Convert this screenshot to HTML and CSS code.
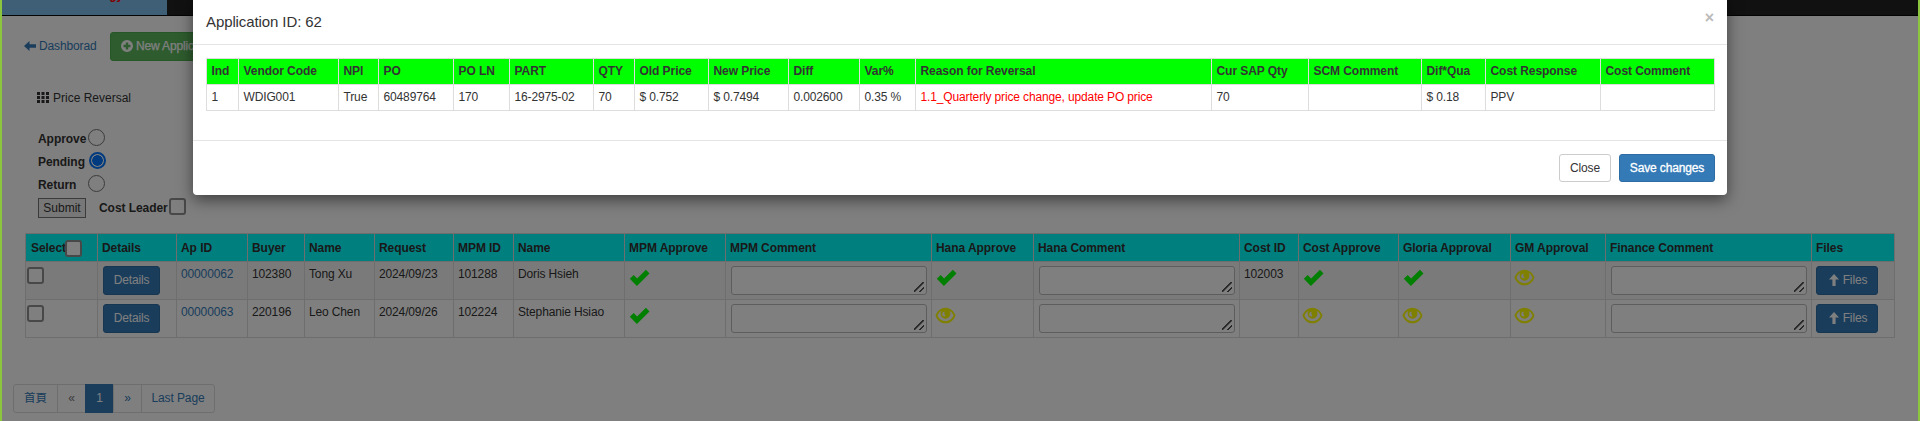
FILE: index.html
```
<!DOCTYPE html>
<html lang="en">
<head>
<meta charset="utf-8">
<title>Price Reversal</title>
<link rel="stylesheet" href="styles.css">
</head>
<body>
<svg class="defs" aria-hidden="true">
  <symbol id="check" viewBox="0 0 20 17"><path d="M.3 9.700 4.200 6l3.400 3.400L16.400.8l3.600 3.600L7.400 17z"/></symbol>
  <symbol id="eye" viewBox="0 0 22 17"><path fill-rule="evenodd" d="M11 .3C5.700.3 2 4.300.5 8.500 2 12.700 5.700 16.700 11 16.700s9-4 10.500-8.200C20 4.300 16.300.3 11 .3zM7.200 3.300C5.900 4.500 5.900 5.500 5.900 6.800a5.100 5.100 0 0 0 10.200 0c0-1.300 0-2.300-1.300-3.500 2.200 1.100 3.700 3.100 4.600 5.200-1.700 3.700-4.700 6-8.400 6s-6.700-2.300-8.400-6c.9-2.100 2.400-4.100 4.600-5.200zM8.500 4.800c-1.300 1.300-1.200 4 .5 4.600 1.300.4 2.300-.5 1.600-1.500C9.600 7 9.500 5.500 10.300 4.600z"/></symbol>
  <symbol id="left" viewBox="0 0 12 10"><path d="M0 5 5.500 0v3.300H12v3.400H5.500V10z"/></symbol>
  <symbol id="up" viewBox="0 0 10 12"><path d="M5 0l5 5.600H6.600V12H3.400V5.600H0z"/></symbol>
  <symbol id="plus" viewBox="0 0 12 12"><path fill-rule="evenodd" d="M6 0a6 6 0 1 0 0 12A6 6 0 0 0 6 0zM4.800 2.500h2.400v2.300h2.300v2.400H7.200v2.300H4.800V7.200H2.500V4.800h2.300z"/></symbol>
  <symbol id="grid" viewBox="0 0 12 11"><path d="M0 0h3v3H0zM4.500 0h3v3h-3zM9 0h3v3H9zM0 4h3v3H0zM4.500 4h3v3h-3zM9 4h3v3H9zM0 8h3v3H0zM4.500 8h3v3h-3zM9 8h3v3H9z"/></symbol>
</svg>

<div class="page">
  <header class="navbar"><div class="brand">Technology</div></header>
  <nav class="toolbar">
    <a class="dash"><svg class="i12"><use href="#left"/></svg>Dashborad</a>
    <a class="btn success"><svg class="i12 round"><use href="#plus"/></svg>New Application</a>
  </nav>
  <div class="heading"><svg class="i12"><use href="#grid"/></svg>Price Reversal</div>
  <form class="filters">
    <label class="opt"><b>Approve</b><input class="box" type="radio" name="st"></label>
    <label class="opt mid"><b>Pending</b><input class="box" type="radio" name="st" checked></label>
    <label class="opt"><b>Return</b><input class="box" type="radio" name="st"></label>
    <div class="submit-row"><button class="submit" type="button">Submit</button><b>Cost Leader</b><input class="box" type="checkbox"></div>
  </form>

  <table class="grid main">
    <colgroup><col class="m1"><col class="m2"><col class="m3"><col class="m4"><col class="m5"><col class="m6"><col class="m7"><col class="m8"><col class="m9"><col class="m10"><col class="m11"><col class="m12"><col class="m13"><col class="m14"><col class="m15"><col class="m16"><col class="m17"><col class="m18"></colgroup>
    <thead><tr><th class="selhead"><span class="sel">Select<input class="box" type="checkbox"></span></th><th>Details</th><th>Ap ID</th><th>Buyer</th><th>Name</th><th>Request</th><th>MPM ID</th><th>Name</th><th>MPM Approve</th><th>MPM Comment</th><th>Hana Approve</th><th>Hana Comment</th><th>Cost ID</th><th>Cost Approve</th><th>Gloria Approval</th><th>GM Approval</th><th>Finance Comment</th><th>Files</th></tr></thead>
    <tbody>
      <tr class="odd"><td class="pick"><input class="box" type="checkbox"></td><td><a class="btn primary">Details</a></td><td><a>00000062</a></td><td>102380</td><td>Tong Xu</td><td>2024/09/23</td><td>101288</td><td>Doris Hsieh</td><td><svg class="check"><use href="#check"/></svg></td><td><textarea></textarea></td><td><svg class="check"><use href="#check"/></svg></td><td><textarea></textarea></td><td>102003</td><td><svg class="check"><use href="#check"/></svg></td><td><svg class="check"><use href="#check"/></svg></td><td><svg class="eye"><use href="#eye"/></svg></td><td><textarea></textarea></td><td><a class="btn primary"><svg class="up"><use href="#up"/></svg>Files</a></td></tr>
      <tr><td class="pick"><input class="box" type="checkbox"></td><td><a class="btn primary">Details</a></td><td><a>00000063</a></td><td>220196</td><td>Leo Chen</td><td>2024/09/26</td><td>102224</td><td>Stephanie Hsiao</td><td><svg class="check"><use href="#check"/></svg></td><td><textarea></textarea></td><td><svg class="eye"><use href="#eye"/></svg></td><td><textarea></textarea></td><td></td><td><svg class="eye"><use href="#eye"/></svg></td><td><svg class="eye"><use href="#eye"/></svg></td><td><svg class="eye"><use href="#eye"/></svg></td><td><textarea></textarea></td><td><a class="btn primary"><svg class="up"><use href="#up"/></svg>Files</a></td></tr>
    </tbody>
  </table>

  <div class="pager"><a class="p1">首頁</a><a class="p2 muted">«</a><a class="p2 current">1</a><a class="p2">»</a><a class="p3">Last Page</a></div>
</div>

<div class="backdrop">
  <section class="modal">
    <div class="modal-head"><span>Application ID: 62</span><span class="x">×</span></div>
    <div class="modal-body">
      <table class="grid detail">
        <colgroup><col class="d1"><col class="d2"><col class="d3"><col class="d4"><col class="d5"><col class="d6"><col class="d7"><col class="d8"><col class="d9"><col class="d10"><col class="d11"><col class="d12"><col class="d13"><col class="d14"><col class="d15"><col class="d16"><col class="d17"></colgroup>
        <thead><tr><th>Ind</th><th>Vendor Code</th><th>NPI</th><th>PO</th><th>PO LN</th><th>PART</th><th>QTY</th><th>Old Price</th><th>New Price</th><th>Diff</th><th>Var%</th><th>Reason for Reversal</th><th>Cur SAP Qty</th><th>SCM Comment</th><th>Dif*Qua</th><th>Cost Response</th><th>Cost Comment</th></tr></thead>
        <tbody><tr><td>1</td><td>WDIG001</td><td>True</td><td>60489764</td><td>170</td><td>16-2975-02</td><td>70</td><td>$ 0.752</td><td>$ 0.7494</td><td>0.002600</td><td>0.35 %</td><td class="reason">1.1_Quarterly price change, update PO price</td><td>70</td><td></td><td>$ 0.18</td><td>PPV</td><td></td></tr></tbody>
      </table>
    </div>
    <div class="modal-foot"><button class="btn plain">Close</button><button class="btn primary save">Save changes</button></div>
  </section>
</div>
<div class="edges"></div>
</body>
</html>
```
FILE: styles.css
```
* { box-sizing: border-box; }
body { margin: 0; height: 421px; overflow: hidden; position: relative; background: #fff; color: #333; font: 12px/18px "Liberation Sans", Arial, "Noto Sans CJK TC", sans-serif; letter-spacing: -.14px; }
.defs { position: absolute; width: 0; height: 0; }
svg { display: block; fill: currentColor; }
a { color: #337ab7; text-decoration: none; }
.page { height: 421px; }

.navbar { display: flex; align-items: flex-end; height: 16px; background: #222; border-bottom: 1px solid #080808; padding-left: 2px; }
.brand { width: 165px; height: 30px; flex: none; padding-right: 44px; background: #7fbfee; color: #f00; font-weight: bold; font-size: 12px; line-height: 20px; text-align: right; }
.toolbar { display: flex; align-items: flex-start; height: 65px; padding: 16px 0 0 24px; }
.dash { display: flex; align-items: center; gap: 3px; width: 86px; height: 28px; font-size: 12px; }
.i12 { width: 12px; height: 11px; }
.dash .i12 { height: 10px; }
.i12.round { height: 12px; }
.btn { display: inline-flex; align-items: center; justify-content: center; height: 29px; border: 1px solid #2e6da4; border-radius: 3px; padding: 0 10px 1px; font: 12px/18px "Liberation Sans", Arial, sans-serif; letter-spacing: -.14px; color: #fff; white-space: nowrap; }
.success { background: #5cb85c; border-color: #4cae4c; gap: 3px; -webkit-text-stroke: .25px; }
.primary { background: #337ab7; }
.main .btn.primary { width: 57px; margin-left: 1px; padding-inline: 0; }
.main td:last-child .btn.primary { width: 62px; margin-left: 0; }
.heading { display: flex; align-items: center; gap: 4px; padding-left: 37px; height: 33px; letter-spacing: 0; }
.filters { padding: 12px 0 0 38px; height: 119px; }
.opt { display: flex; align-items: center; height: 23px; }
.opt b { width: 50px; line-height: 22px; padding-top: 2px; }
.opt.mid b { width: 51px; }
.box { appearance: none; margin: 0; width: 17px; height: 17px; flex: none; background: #fff; border: 1.5px solid #767676; border-radius: 3px; }
.main .box, .submit-row .box { border-width: 2px; border-color: #909090; }
.box[type="radio"] { border-radius: 50%; border-width: 1px; }
.box[type="radio"]:checked { border: 2px solid #0075ff; background: radial-gradient(circle, #0075ff 5px, #fff 5.6px); }
.submit-row { display: flex; align-items: center; height: 24px; padding-top: 2px; }
.submit { width: 48px; height: 20px; margin-right: 13px; padding: 0; border: 1px solid #767676; background: #efefef; color: #333; font: 12px/16px "Liberation Sans", Arial, sans-serif; }
.submit-row .box { margin: -3px 0 0 1px; }
th, b { letter-spacing: -.06px; }

.grid { border-collapse: collapse; table-layout: fixed; }
.grid th, .grid td { border: 1px solid #ddd; text-align: left; vertical-align: top; white-space: nowrap; }
.main { width: 1870px; margin-left: 25px; }
.main th { background: #0ff; height: 28px; padding: 5px 4px 4px; }
.main th.selhead { padding-left: 5px; }
.main td { height: 38px; padding: 4px 4px 3px; line-height: 16px; }
.odd { background: #f5f5f5; }
.sel { display: flex; align-items: center; height: 18px; }
.sel .box { margin-left: -1px; }
.main td.pick { padding: 5px 0 0 1px; }
textarea { display: block; width: 196px; height: 29px; margin-left: 1px; border: 1px solid #bbb; border-radius: 3px; background: #fff; }
/* two diagonal grip strokes in the resize corner */
textarea::-webkit-resizer { background: linear-gradient(135deg, transparent 42%, #555 44% 54%, transparent 56% 70%, #555 72% 82%, transparent 84%) 3px 3px / 10px 10px no-repeat; }
.check { width: 21px; height: 17px; fill: #0f0; margin-top: 3px; }
.eye { width: 21px; height: 17px; fill: #ff0; margin: 3px 0 0 -1px; }
.up { width: 10px; height: 12px; margin: 0 4px 0 2px; }
.m1{width:72px}.m2{width:79px}.m3{width:71px}.m4{width:57px}.m5{width:70px}.m6{width:79px}.m7{width:60px}.m8{width:111px}.m9{width:101px}.m10{width:206px}.m11{width:102px}.m12{width:206px}.m13{width:59px}.m14{width:100px}.m15{width:112px}.m16{width:95px}.m17{width:206px}.m18{width:83px}

.pager { display: flex; width: 202px; height: 29px; margin: 46px 0 0 13px; border: 1px solid #ddd; border-radius: 3px; }
.pager a { display: flex; align-items: center; justify-content: center; padding-bottom: 1px; border-left: 1px solid #ddd; font-size: 12px; letter-spacing: 0; }
.pager .p1 { width: 43px; border-left: 0; font-size: 11.5px; }
.pager .p2 { width: 28px; }
.pager .p3 { flex: 1; letter-spacing: -.1px; }
.pager .muted { color: #777; }
.pager .current { margin: -1px 0; background: #337ab7; border-color: #337ab7; color: #fff; }

.backdrop { position: absolute; inset: 0; background: rgba(0, 0, 0, .5); }
.modal { width: 1534px; height: 201px; margin: -6px 0 0 193px; background: #fff; border-radius: 4px; box-shadow: 0 5px 15px rgba(0, 0, 0, .5); }
.modal-head { display: flex; justify-content: space-between; height: 51px; padding: 19px 13px 0 13px; border-bottom: 1px solid #e5e5e5; font-size: 15px; line-height: 18px; letter-spacing: -.1px; }
.x { color: #bbb; font-size: 16px; font-weight: bold; line-height: 9px; }
.modal-body { height: 95px; padding: 13px 0 0 13px; }
.detail { width: 1509px; }
.detail th, .detail td { height: 26px; padding: 3px 4px 4px 4.5px; }
.detail th { background: #0f0; }
.reason { color: red; }
.d1{width:32px}.d2{width:100px}.d3{width:40px}.d4{width:75px}.d5{width:56px}.d6{width:84px}.d7{width:41px}.d8{width:74px}.d9{width:80px}.d10{width:71px}.d11{width:56px}.d12{width:296px}.d13{width:97px}.d14{width:113px}.d15{width:64px}.d16{width:115px}.d17{width:114px}
.modal-foot { display: flex; justify-content: flex-end; gap: 8px; padding: 13px 12px 0; border-top: 1px solid #e5e5e5; }
.btn.plain { width: 52px; height: 28px; padding-inline: 0; background: #fff; border-color: #ccc; color: #333; }
.save { width: 96px; height: 28px; padding-inline: 0; -webkit-text-stroke: .3px; }
.edges { position: absolute; inset: 0; border: solid #8cc63f; border-width: 0 2px; pointer-events: none; }
```
